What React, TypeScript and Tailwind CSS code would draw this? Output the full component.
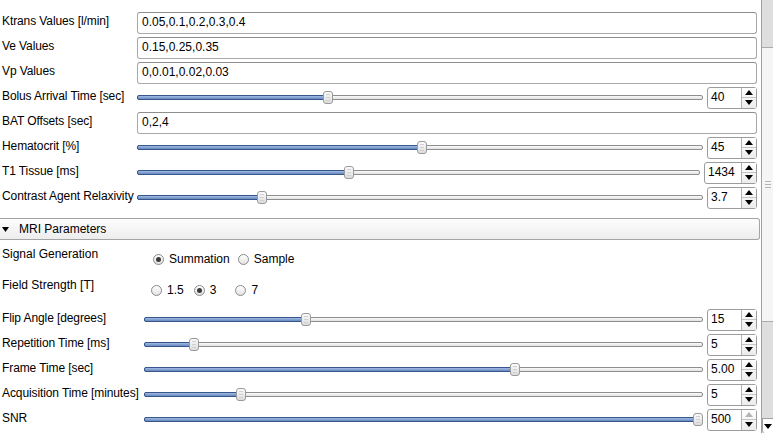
import React from 'react'

const UpArrow = ({ disabled }: { disabled?: boolean }) => (
  <svg width="8" height="5" viewBox="0 0 8 5">
    <path d="M0 5 L4 0 L8 5 Z" fill={disabled ? '#b4b4b4' : '#000'} />
  </svg>
)

const DownArrow = () => (
  <svg width="8" height="5" viewBox="0 0 8 5">
    <path d="M0 0 L8 0 L4 5 Z" fill="#000" />
  </svg>
)

const SpinBox = ({ value, wide, upDisabled }: { value: string; wide?: boolean; upDisabled?: boolean }) => (
  <div
    className={`ml-[4px] flex h-[22px] shrink-0 rounded-[3px] border border-[#9c9c9c] bg-white ${wide ? 'w-[53px]' : 'w-[50px]'}`}
  >
    <div className="flex flex-1 items-center pl-[3px] text-[12px]">{value}</div>
    <div className="flex w-[15px] flex-col border-l border-[#b4b4b4] bg-gradient-to-b from-[#ffffff] to-[#ececec]">
      <div className="flex flex-1 items-center justify-center border-b border-[#c4c4c4]">
        <UpArrow disabled={upDisabled} />
      </div>
      <div className="flex flex-1 items-center justify-center">
        <DownArrow />
      </div>
    </div>
  </div>
)

const Slider = ({ f }: { f: number }) => (
  <div className="relative h-[25px] flex-1">
    <div className="absolute left-0 right-0 top-[10px] h-[5px] rounded-[2px] border border-[#8e8e8e] bg-gradient-to-b from-[#fafafa] to-[#e2e2e2]" />
    <div
      className="absolute left-0 top-[10px] h-[5px] rounded-[2px] border border-[#37578a] bg-gradient-to-b from-[#a3bbe4] to-[#6688c0]"
      style={{ width: `calc(${f} * (100% - 10px) + 5px)` }}
    />
    <div
      className="absolute top-[6px] flex h-[13px] w-[10px] flex-col items-center justify-center gap-[2px] rounded-[3px] border border-[#9a9a9a] bg-gradient-to-b from-[#fbfbfb] to-[#dcdcdc]"
      style={{ left: `calc(${f} * (100% - 10px))` }}
    >
      <div className="h-[1px] w-[4px] bg-[#d0d0d0]" />
      <div className="h-[1px] w-[4px] bg-[#d0d0d0]" />
      <div className="h-[1px] w-[4px] bg-[#d0d0d0]" />
    </div>
  </div>
)

const TextField = ({ value }: { value: string }) => (
  <div className="flex h-[22px] flex-1 items-center rounded-[3px] border border-[#a8a8a8] border-t-[#8e8e8e] bg-white pl-[4px] text-[12px]">
    {value}
  </div>
)

const Row = ({ label, wide, children }: { label: string; wide?: boolean; children: React.ReactNode }) => (
  <div className="flex h-[25px] items-center pr-[4px]">
    <div className={`shrink-0 whitespace-nowrap pb-[3px] pl-[2px] tracking-[-0.1px] ${wide ? 'w-[144px]' : 'w-[137px]'}`}>
      {label}
    </div>
    {children}
  </div>
)

const Radio = ({ label, checked, ml }: { label: string; checked?: boolean; ml: string }) => (
  <div className={`flex items-center gap-[5px] ${ml}`}>
    <div className="flex h-[11px] w-[11px] items-center justify-center rounded-full border border-[#8a8a8a] bg-gradient-to-b from-[#ffffff] to-[#e2e2e2]">
      {checked && <div className="h-[5px] w-[5px] rounded-full bg-[#3a3a3a]" />}
    </div>
    <span>{label}</span>
  </div>
)

const lower = [
  { label: 'Flip Angle [degrees]', f: 0.286, value: '15' },
  { label: 'Repetition Time [ms]', f: 0.082, value: '5' },
  { label: 'Frame Time [sec]', f: 0.667, value: '5.00' },
  { label: 'Acquisition Time [minutes]', f: 0.1676, value: '5' },
  { label: 'SNR', f: 1, value: '500', upDisabled: true },
]

export default function App() {
  return (
    <div className="flex h-[433px] w-[773px] overflow-hidden bg-white font-['Liberation_Sans',Arial,sans-serif] text-[12px] leading-[15px] text-black">
      <div className="flex w-[761px] flex-col pt-[10px]">
        <Row label="Ktrans Values [l/min]">
          <TextField value="0.05,0.1,0.2,0.3,0.4" />
        </Row>
        <Row label="Ve Values">
          <TextField value="0.15,0.25,0.35" />
        </Row>
        <Row label="Vp Values">
          <TextField value="0,0.01,0.02,0.03" />
        </Row>
        <Row label="Bolus Arrival Time [sec]">
          <Slider f={0.3345} />
          <SpinBox value="40" />
        </Row>
        <Row label="BAT Offsets [sec]">
          <TextField value="0,2,4" />
        </Row>
        <Row label="Hematocrit [%]">
          <Slider f={0.503} />
          <SpinBox value="45" />
        </Row>
        <Row label="T1 Tissue [ms]">
          <Slider f={0.374} />
          <SpinBox value="1434" wide />
        </Row>
        <Row label="Contrast Agent Relaxivity">
          <Slider f={0.216} />
          <SpinBox value="3.7" />
        </Row>

        <div className="mr-[1px] mt-[8px] flex h-[22px] items-center rounded-r-[3px] border-y border-r border-[#a4a4a4] bg-gradient-to-b from-[#fdfdfd] to-[#ededed]">
          <svg width="7" height="5" viewBox="0 0 7 5" className="ml-[2px]">
            <path d="M0 0 L7 0 L3.5 5 Z" fill="#000" />
          </svg>
          <span className="ml-[10px]">MRI Parameters</span>
        </div>

        <div className="mt-[6px] flex h-[30px] items-start">
          <div className="mt-[1px] w-[144px] shrink-0 pl-[2px]">Signal Generation</div>
          <div className="mt-[6px] flex items-center">
            <Radio label="Summation" checked ml="ml-[9px]" />
            <Radio label="Sample" ml="ml-[8px]" />
          </div>
        </div>
        <div className="flex h-[31px] items-start">
          <div className="mt-[2px] w-[144px] shrink-0 pl-[2px]">Field Strength [T]</div>
          <div className="mt-[7px] flex items-center">
            <Radio label="1.5" ml="ml-[7px]" />
            <Radio label="3" checked ml="ml-[10px]" />
            <Radio label="7" ml="ml-[19px]" />
          </div>
        </div>
        {lower.map((r) => (
          <Row key={r.label} label={r.label} wide>
            <Slider f={r.f} />
            <SpinBox value={r.value} upDisabled={r.upDisabled} />
          </Row>
        ))}
      </div>

      <div className="flex w-[12px] flex-col border-l border-[#a0a0a0] bg-[#dedede]">
        <div className="h-[47px]" />
        <div className="flex h-[275px] flex-col items-center justify-center gap-[2px] border-y border-[#ababab] bg-[#f5f5f5]">
          <div className="h-[1px] w-[6px] bg-[#b4b4b4]" />
          <div className="h-[1px] w-[6px] bg-[#b4b4b4]" />
          <div className="h-[1px] w-[6px] bg-[#b4b4b4]" />
        </div>
        <div className="flex-1" />
        <div className="flex h-[15px] items-center justify-center rounded-bl-[3px] border-l border-t border-[#a0a0a0] bg-white">
          <DownArrow />
        </div>
      </div>
    </div>
  )
}
